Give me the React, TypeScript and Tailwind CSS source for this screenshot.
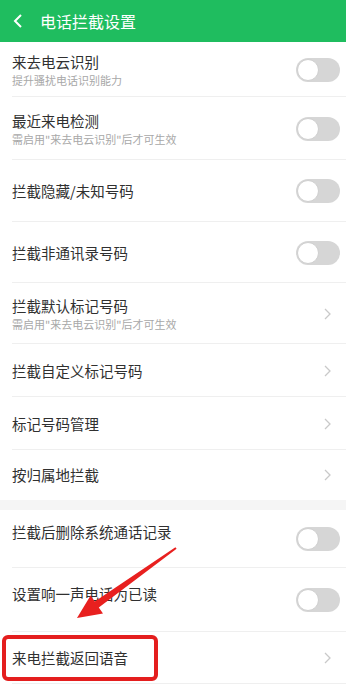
import React from "react";

type Row = {
  title: string;
  sub?: string;
  kind: "toggle" | "link";
  h: string;
  textClass?: string;
  divider?: boolean;
};

const topRows: Row[] = [
  { title: "来去电云识别", sub: "提升骚扰电话识别能力", kind: "toggle", h: "h-[55px]", divider: true },
  { title: "最近来电检测", sub: "需启用\"来去电云识别\"后才可生效", kind: "toggle", h: "h-[63px]", divider: true },
  { title: "拦截隐藏/未知号码", kind: "toggle", h: "h-[62px]", divider: true },
  { title: "拦截非通讯录号码", kind: "toggle", h: "h-[61px]", divider: true },
  { title: "拦截默认标记号码", sub: "需启用\"来去电云识别\"后才可生效", kind: "link", h: "h-[61px]", divider: true },
  { title: "拦截自定义标记号码", kind: "link", h: "h-[53px]", divider: true },
  { title: "标记号码管理", kind: "link", h: "h-[53px]", divider: true },
  { title: "按归属地拦截", kind: "link", h: "h-[50px]" },
];

const bottomRows: Row[] = [
  { title: "拦截后删除系统通话记录", kind: "toggle", h: "h-[58px]", textClass: "mb-[14px]", divider: true },
  { title: "设置响一声电话为已读", kind: "toggle", h: "h-[64px]", textClass: "mb-[12px]", divider: true },
  { title: "来电拦截返回语音", kind: "link", h: "h-[52px]", divider: true },
];

function Toggle() {
  return (
    <div className="flex h-[24px] w-[44px] items-center rounded-full bg-[#d6d6d6] pl-[1px]">
      <div className="h-[22px] w-[22px] rounded-full border border-[#cfcfcf] bg-white" />
    </div>
  );
}

function Chevron() {
  return (
    <svg width="10" height="14" viewBox="0 0 10 14" className="mr-[8px]">
      <path d="M3 2 L8 7 L3 12" fill="none" stroke="#c9c9c9" strokeWidth="1.3" />
    </svg>
  );
}

function SettingRow({ row }: { row: Row }) {
  return (
    <div className={`relative flex items-center justify-between pl-[12px] pr-[6px] ${row.h}`}>
      <div className={`flex flex-col ${row.textClass ?? ""}`}>
        <span className="text-[14.5px] leading-[20px] text-[#303030]">{row.title}</span>
        {row.sub && (
          <span className="mt-[1px] text-[11px] leading-[15px] text-[#a8a8a8]">{row.sub}</span>
        )}
      </div>
      {row.kind === "toggle" ? <Toggle /> : <Chevron />}
      {row.divider && (
        <div className="absolute bottom-0 left-[12px] right-0 h-px bg-[#efefef]" />
      )}
    </div>
  );
}

export default function App() {
  return (
    <div
      className="relative h-[688px] w-[346px] overflow-hidden bg-white"
      style={{ fontFamily: '"Noto Sans CJK SC", "Noto Sans", sans-serif' }}
    >
      {/* Header */}
      <div className="flex h-[42px] items-center bg-[#1fbd5f] px-[12px]">
        <svg width="12" height="16" viewBox="0 0 12 16">
          <path d="M9 2 L3 8 L9 14" fill="none" stroke="white" strokeWidth="2" />
        </svg>
        <span className="ml-[16px] text-[16px] text-white">电话拦截设置</span>
      </div>

      {topRows.map((r) => (
        <SettingRow key={r.title} row={r} />
      ))}

      <div className="h-[10px] bg-[#f5f5f5]" />

      {bottomRows.map((r) => (
        <SettingRow key={r.title} row={r} />
      ))}

      {/* Annotation: red box + arrow */}
      <div className="pointer-events-none absolute left-[2px] top-[635px] h-[46px] w-[156px] rounded-[6px] border-[4px] border-[#e41e1e]" />
      <svg
        className="pointer-events-none absolute left-0 top-0"
        width="346"
        height="688"
        viewBox="0 0 346 688"
      >
        <polygon
          points="77,618 103,613.6 98.8,607.4 176.6,548.8 175.4,547.2 94.8,601.6 90.6,595.4"
          fill="#e8201f"
        />
      </svg>
    </div>
  );
}
